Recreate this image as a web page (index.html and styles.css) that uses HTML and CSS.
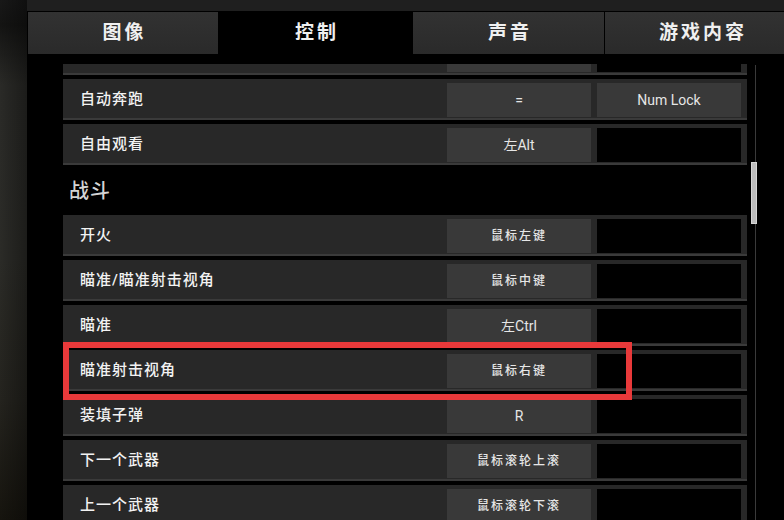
FILE: index.html
```html
<!DOCTYPE html>
<html lang="zh-CN">
<head>
    <meta charset="UTF-8">
    <meta name="viewport" content="width=device-width, initial-scale=1.0">
    <title>控制设置</title>
    <link rel="stylesheet" href="styles.css">
</head>
<body>
    <div class="screen">
        <div class="backdrop"></div>

        <div class="panel">
            <div class="topbar"></div>

            <div class="tabs">
                <div class="tab">图像</div>
                <div class="tab active">控制</div>
                <div class="tab">声音</div>
                <div class="tab">游戏内容</div>
            </div>

            <div class="content">
                <div class="list">
                    <div class="row first">
                        <div class="label"></div>
                        <div class="key"></div>
                        <div class="key empty"></div>
                    </div>
                    <div class="row">
                        <div class="label">自动奔跑</div>
                        <div class="key latin">=</div>
                        <div class="key latin">Num Lock</div>
                    </div>
                    <div class="row">
                        <div class="label">自由观看</div>
                        <div class="key latin">左Alt</div>
                        <div class="key empty"></div>
                    </div>

                    <div class="group">战斗</div>

                    <div class="row">
                        <div class="label">开火</div>
                        <div class="key">鼠标左键</div>
                        <div class="key empty"></div>
                    </div>
                    <div class="row">
                        <div class="label">瞄准/瞄准射击视角</div>
                        <div class="key">鼠标中键</div>
                        <div class="key empty"></div>
                    </div>
                    <div class="row">
                        <div class="label">瞄准</div>
                        <div class="key latin">左Ctrl</div>
                        <div class="key empty"></div>
                    </div>
                    <div class="row">
                        <div class="label">瞄准射击视角</div>
                        <div class="key">鼠标右键</div>
                        <div class="key empty"></div>
                    </div>
                    <div class="row">
                        <div class="label">装填子弹</div>
                        <div class="key latin">R</div>
                        <div class="key empty"></div>
                    </div>
                    <div class="row">
                        <div class="label">下一个武器</div>
                        <div class="key">鼠标滚轮上滚</div>
                        <div class="key empty"></div>
                    </div>
                    <div class="row">
                        <div class="label">上一个武器</div>
                        <div class="key">鼠标滚轮下滚</div>
                        <div class="key empty"></div>
                    </div>
                </div>

                <div class="scroll">
                    <div class="thumb"></div>
                </div>
            </div>
        </div>

        <!-- 标注框 -->
        <div class="mark"></div>
    </div>
</body>
</html>
```

FILE: styles.css
```css
*{
    box-sizing: border-box;
}

body{
    margin: 0;
    background: #000;
    font-family: Roboto, "Noto Sans CJK SC", sans-serif;
    color: #eee;
}

.screen{
    position: relative;
    display: flex;
    width: 784px;
    height: 520px;
    overflow: hidden;
}

.backdrop{
    width: 27px;
    flex-shrink: 0;
    background:
        linear-gradient(to right, rgba(0,0,0,0) 0, rgba(0,0,0,0.35) 100%),
        linear-gradient(to bottom, #181818 0, #141413 25px, #2a2a27 85px, #2b2b27 260px, #24231e 400px, #16140e 520px);
}

.panel{
    flex: 1;
    min-width: 0;
    display: flex;
    flex-direction: column;
    background: #000;
}

.topbar{
    height: 11px;
    background: #1f1f1f;
}

.tabs{
    display: grid;
    grid-template-columns: 190px 195px 191px 194px;
    height: 42px;
    margin: 1px 0 0 1px;
}

.tab{
    display: flex;
    align-items: center;
    justify-content: center;
    padding: 0 0 6px 3px;
    background: linear-gradient(to bottom, #323232, #2a2a2a);
    font-size: 19px;
    font-weight: 700;
    letter-spacing: 3px;
    color: #f0f0f0;
}

.tab:last-child{
    margin-left: 1px;
}

.tab.active{
    background: #000;
}

.content{
    display: flex;
    flex: 1;
    margin-top: 10px;
    min-height: 0;
}

.list{
    width: 684px;
    margin-left: 36px;
    overflow: hidden;
}

.row{
    display: flex;
    align-items: flex-start;
    height: 41px;
    padding: 4px 6px 0 17px;
    margin-bottom: 4px;
    background: #282828;
    border-bottom: 2px solid #3a3a3a;
}

.row.first{
    margin-top: -30px;
}

.label{
    flex: 1;
    line-height: 32px;
    font-size: 15px;
    font-weight: 500;
    letter-spacing: 1px;
    color: #f2f2f2;
}

.key{
    width: 144px;
    height: 34px;
    margin-left: 6px;
    background: #393939;
    line-height: 34px;
    text-align: center;
    font-size: 12px;
    font-weight: 500;
    letter-spacing: 2px;
    color: #e6e6e6;
}

.key.latin{
    font-size: 14px;
    font-weight: 400;
    letter-spacing: 0;
}

.key.empty{
    background: #000;
}

.group{
    height: 42px;
    margin-bottom: 4px;
    padding: 1px 0 0 6px;
    line-height: 42px;
    font-size: 20px;
    font-weight: 500;
    letter-spacing: 1px;
    color: #d4d4d4;
}

.scroll{
    position: relative;
    width: 6px;
    margin-left: 4px;
}

.scroll::before{
    content: "";
    position: absolute;
    top: 1px;
    bottom: 0;
    right: 1px;
    width: 1px;
    background: #3a3a3a;
}

.thumb{
    position: relative;
    height: 62px;
    margin-top: 98px;
    background: #bdbdbd;
    border: 1px solid #d6d6d6;
}

.mark{
    position: absolute;
    left: 63px;
    top: 342px;
    width: 569px;
    height: 58px;
    border: 6px solid #e8393a;
}
```
